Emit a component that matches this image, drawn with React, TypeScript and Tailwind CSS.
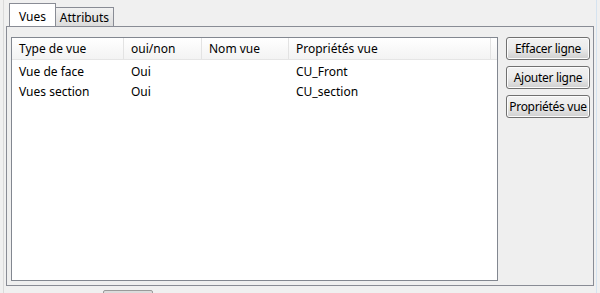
import React from "react";

const cols = [
  { label: "Type de vue", w: "w-[112px]" },
  { label: "oui/non", w: "w-[78px]" },
  { label: "Nom vue", w: "w-[87px]" },
  { label: "Propriétés vue", w: "w-[202px]" },
];

const rows = [
  ["Vue de face", "Oui", "", "CU_Front"],
  ["Vues section", "Oui", "", "CU_section"],
];

function WinButton({ text }: { text: string }) {
  return (
    <button className="h-[23px] w-[84px] rounded-[3px] border border-[#707070] bg-gradient-to-b from-[#f2f2f2] via-[#ebebeb] to-[#cfcfcf] text-[12px] tracking-[-0.3px] text-black leading-none shadow-[inset_0_0_0_1px_#fcfcfc]">
      {text}
    </button>
  );
}

export default function App() {
  return (
    <div className="relative h-[293px] w-[600px] overflow-hidden bg-[#f0f0f0] font-['Noto_Sans',sans-serif] text-[12px] text-black">
      <div className="absolute left-[3px] top-0 h-full w-px bg-[#dadada]" />
      <div className="absolute right-[3px] top-0 h-full w-px bg-[#d5e3f0]" />

      <div className="flex flex-col pl-[6px] pr-[6px] pt-[4px]">
        {/* tabs */}
        <div className="relative z-10 flex h-[22px] items-end pl-[3px]">
          <div className="flex h-[23px] w-[47px] items-center justify-center border border-b-0 border-[#898c95] bg-white pt-[3px]">
            Vues
          </div>
          <div className="flex h-[19px] w-[58px] items-center justify-center border border-b-0 border-l-0 border-[#898c95] bg-gradient-to-b from-[#f2f2f2] to-[#dcdcdc] pt-[1px]">
            Attributs
          </div>
        </div>

        {/* panel */}
        <div className="flex h-[260px] gap-[8px] border border-[#898c95] bg-[#efefef] pl-[4px] pr-[3px] pt-[10px]">
          <div className="flex h-[244px] w-[488px] flex-col border border-[#828790] bg-white">
            <div className="flex h-[22px] border-b border-[#e5e5e5] bg-gradient-to-b from-white to-[#f3f3f3]">
              {cols.map((c) => (
                <div
                  key={c.label}
                  className={`${c.w} flex items-center border-r border-[#e3e3e3] pl-[7px]`}
                >
                  {c.label}
                </div>
              ))}
            </div>
            <div className="pt-[2px]">
              {rows.map((r) => (
                <div key={r[0]} className="flex h-[20px] items-center">
                  {r.map((v, i) => (
                    <div key={i} className={`${cols[i].w} pl-[7px]`}>
                      {v}
                    </div>
                  ))}
                </div>
              ))}
            </div>
          </div>
          <div className="flex flex-col gap-[6px]">
            <WinButton text="Effacer ligne" />
            <WinButton text="Ajouter ligne" />
            <WinButton text="Propriétés vue" />
          </div>
        </div>
      </div>

      <div className="absolute left-[103px] top-[290px] h-[4px] w-[50px] rounded-t-[2px] border border-[#9a9a9a] bg-[#dcdcdc]" />
    </div>
  );
}
